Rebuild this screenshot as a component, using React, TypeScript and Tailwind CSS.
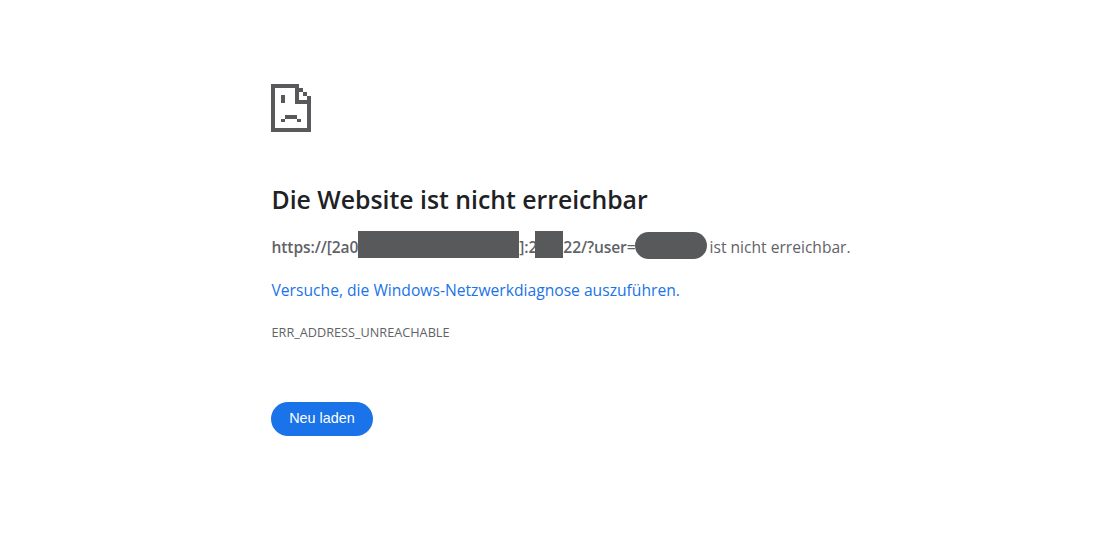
import React from 'react';

function SadFile() {
  return (
    <svg width="40" height="48" viewBox="0 0 40 48" fill="#58595b" className="-ml-[0.5px] block">
      <path d="M0 0H26V4H4V44H36V20H40V48H0Z" />
      <rect x="24" y="0" width="4" height="20" />
      <rect x="24" y="16" width="16" height="4" />
      <rect x="28" y="4" width="4" height="4" />
      <rect x="32" y="8" width="4" height="4" />
      <rect x="36" y="12" width="4" height="4" />
      <rect x="10" y="11" width="4" height="8" />
      <rect x="14" y="31" width="12" height="4" />
      <rect x="10" y="35" width="4" height="3" />
      <rect x="26" y="35" width="4" height="3" />
    </svg>
  );
}

export default function App() {
  return (
    <div className="h-[551px] w-[1107px] bg-white pl-[271.5px] pt-[84px] font-['Open_Sans','Liberation_Sans',sans-serif] text-[#5f6368]">
      <SadFile />
      <h1 className="mt-[51px] text-[24.8px] leading-[32px] font-semibold text-[#202124]">
        Die Website ist nicht erreichbar
      </h1>
      <div className="mt-[17px] flex h-[30px] items-start text-[15.6px] leading-[30px] whitespace-nowrap">
        <strong className="font-semibold tracking-[-0.1px]">https://[2a0</strong>
        <span className="-mt-px h-[27px] w-[161px] bg-[#58595b]" />
        <strong className="font-semibold tracking-[-0.1px]">]:2</strong>
        <span className="-mt-px -ml-[2px] h-[27px] w-[28px] bg-[#58595b]" />
        <strong className="font-semibold tracking-[-0.1px]">22/?user=</strong>
        <span className="-ml-px h-[27px] w-[72px] rounded-[14px] bg-[#58595b]" />
        <span className="ml-[3px]">ist nicht erreichbar.</span>
      </div>
      <a className="mt-[13px] block text-[15.65px] leading-[30px] text-[#1a73e8]">
        Versuche, die Windows-Netzwerkdiagnose auszuführen.
      </a>
      <div className="mt-[19px] text-[12.7px] leading-[16px]">ERR_ADDRESS_UNREACHABLE</div>
      <button className="mt-[62px] -ml-[0.5px] block h-[34px] w-[102px] rounded-[17px] bg-[#1a73e8] font-['Liberation_Sans',sans-serif] text-[14.4px] text-white">
        Neu laden
      </button>
    </div>
  );
}
